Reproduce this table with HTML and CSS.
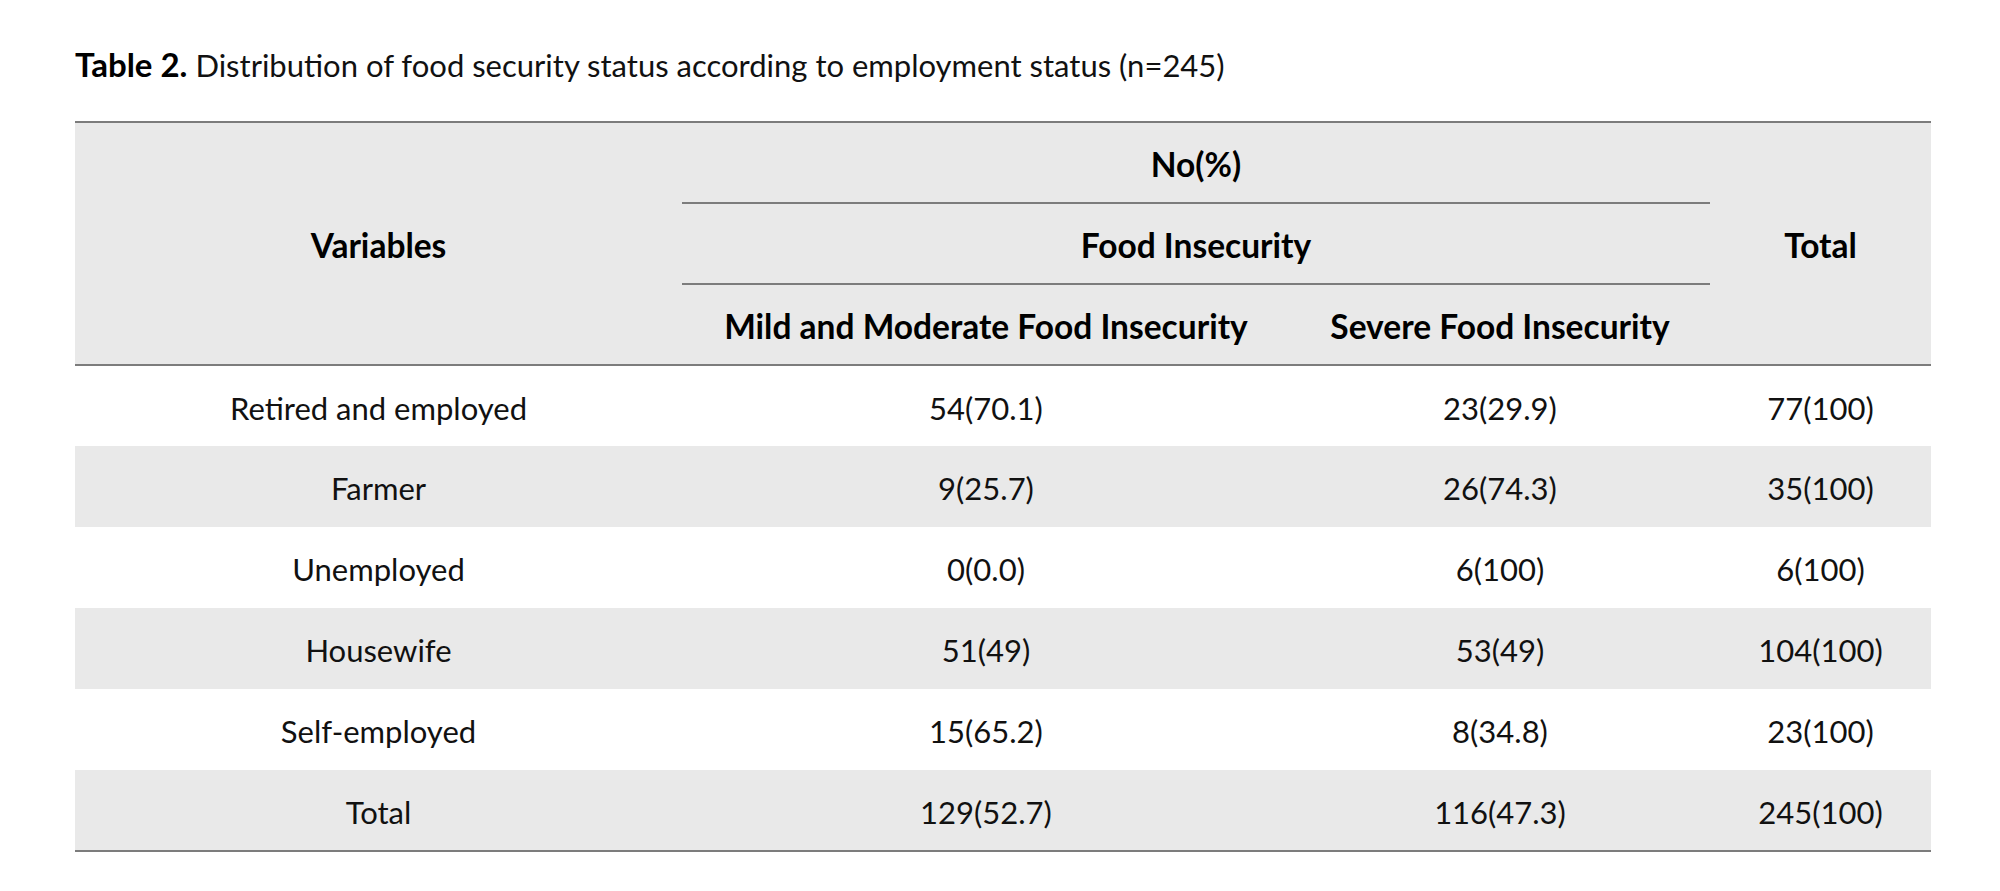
FILE: index.html
```html
<!DOCTYPE html>
<html lang="en">
<head>
<meta charset="utf-8">
<title>Table 2</title>
<link rel="stylesheet" href="styles.css">
</head>
<body>
<div class="page">
  <p class="caption"><b>Table 2.</b> Distribution of food security status according to employment status (n=245)</p>
  <table class="data">
    <colgroup>
      <col class="c-var">
      <col class="c-mild">
      <col class="c-sev">
      <col class="c-tot">
    </colgroup>
    <thead>
      <tr>
        <th rowspan="3">Variables</th>
        <th colspan="2" class="ruled">No(%)</th>
        <th rowspan="3">Total</th>
      </tr>
      <tr>
        <th colspan="2" class="ruled">Food Insecurity</th>
      </tr>
      <tr>
        <th>Mild and Moderate Food Insecurity</th>
        <th>Severe Food Insecurity</th>
      </tr>
    </thead>
    <tbody>
      <tr><td>Retired and employed</td><td>54(70.1)</td><td>23(29.9)</td><td>77(100)</td></tr>
      <tr class="shade"><td>Farmer</td><td>9(25.7)</td><td>26(74.3)</td><td>35(100)</td></tr>
      <tr><td>Unemployed</td><td>0(0.0)</td><td>6(100)</td><td>6(100)</td></tr>
      <tr class="shade"><td>Housewife</td><td>51(49)</td><td>53(49)</td><td>104(100)</td></tr>
      <tr><td>Self-employed</td><td>15(65.2)</td><td>8(34.8)</td><td>23(100)</td></tr>
      <tr class="shade"><td>Total</td><td>129(52.7)</td><td>116(47.3)</td><td>245(100)</td></tr>
    </tbody>
  </table>
</div>
</body>
</html>
```

FILE: styles.css
```css
html, body {
  margin: 0;
  padding: 0;
  background: #ffffff;
}

.page {
  padding: 44px 0 0 75px;
  font-family: Lato, "Open Sans", "Liberation Sans", sans-serif;
  color: #111111;
}

.caption {
  margin: 0 0 36px 0;
  font-size: 31px;
  line-height: 40px;
  color: #111111;
}

.caption b {
  font-weight: 700;
  font-size: 33px;
  color: #000000;
}

.data {
  width: 1856px;
  border-collapse: collapse;
  table-layout: fixed;
  font-size: 31px;
  line-height: 40px;
  border-top: 2px solid #7c7c7c;
  border-bottom: 2px solid #7c7c7c;
}

.c-var { width: 607px; }
.c-mild { width: 608px; }
.c-sev { width: 420px; }
.c-tot { width: 221px; }

.data thead {
  background: #e9e9e9;
  border-bottom: 2px solid #7c7c7c;
}

.data tr {
  height: 81px;
}

.data th {
  font-weight: 700;
  font-size: 33.5px;
  color: #000000;
  text-align: center;
  vertical-align: middle;
  padding: 3px 0 0 0;
}

.data th.ruled {
  border-bottom: 2px solid #7c7c7c;
}

.data td {
  text-align: center;
  vertical-align: middle;
  padding: 3px 0 0 0;
  color: #111111;
}

.data tr.shade {
  background: #e9e9e9;
}
```
